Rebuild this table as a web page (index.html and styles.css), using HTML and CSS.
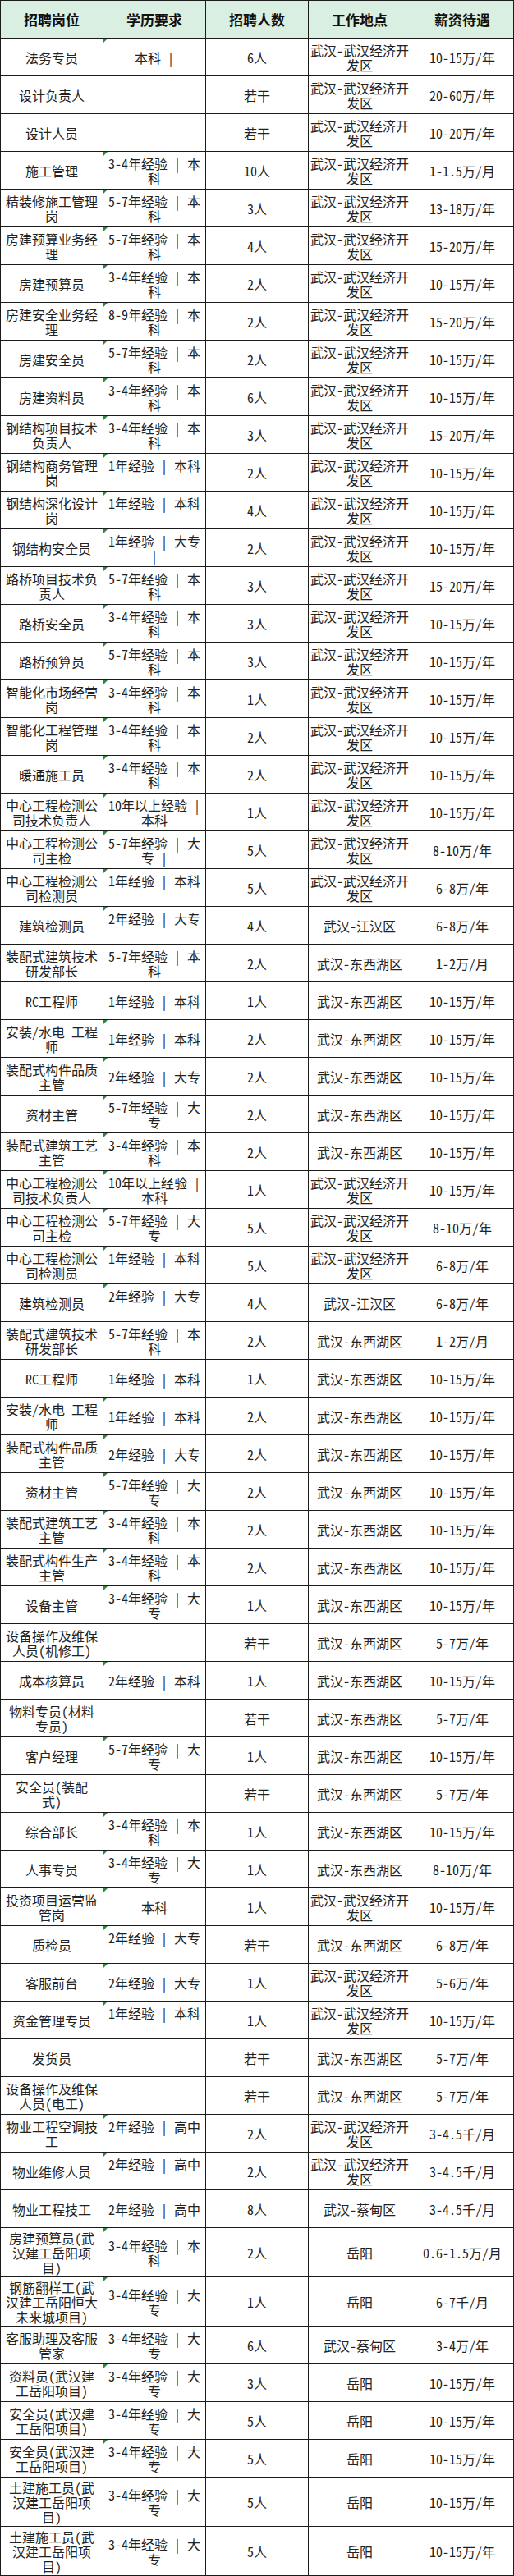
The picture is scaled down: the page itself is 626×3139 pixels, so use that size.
FILE: index.html
```html
<!DOCTYPE html>
<html lang="zh-CN">
<head>
<meta charset="utf-8">
<title>招聘岗位</title>
<link rel="stylesheet" href="styles.css">
</head>
<body>
<table class="jobs">
<thead>
<tr><th>招聘岗位</th><th>学历要求</th><th>招聘人数</th><th>工作地点</th><th>薪资待遇</th></tr>
</thead>
<tbody>
<tr><td>法务专员</td><td class="mark">本科 |</td><td>6人</td><td>武汉-武汉经济开<br>发区</td><td>10-15万/年</td></tr>
<tr><td>设计负责人</td><td></td><td>若干</td><td>武汉-武汉经济开<br>发区</td><td>20-60万/年</td></tr>
<tr><td>设计人员</td><td></td><td>若干</td><td>武汉-武汉经济开<br>发区</td><td>10-20万/年</td></tr>
<tr><td>施工管理</td><td class="mark">3-4年经验 | 本<br>科</td><td>10人</td><td>武汉-武汉经济开<br>发区</td><td>1-1.5万/月</td></tr>
<tr><td>精装修施工管理<br>岗</td><td class="mark">5-7年经验 | 本<br>科</td><td>3人</td><td>武汉-武汉经济开<br>发区</td><td>13-18万/年</td></tr>
<tr><td>房建预算业务经<br>理</td><td class="mark">5-7年经验 | 本<br>科</td><td>4人</td><td>武汉-武汉经济开<br>发区</td><td>15-20万/年</td></tr>
<tr><td>房建预算员</td><td class="mark">3-4年经验 | 本<br>科</td><td>2人</td><td>武汉-武汉经济开<br>发区</td><td>10-15万/年</td></tr>
<tr><td>房建安全业务经<br>理</td><td class="mark">8-9年经验 | 本<br>科</td><td>2人</td><td>武汉-武汉经济开<br>发区</td><td>15-20万/年</td></tr>
<tr><td>房建安全员</td><td class="mark">5-7年经验 | 本<br>科</td><td>2人</td><td>武汉-武汉经济开<br>发区</td><td>10-15万/年</td></tr>
<tr><td>房建资料员</td><td class="mark">3-4年经验 | 本<br>科</td><td>6人</td><td>武汉-武汉经济开<br>发区</td><td>10-15万/年</td></tr>
<tr><td>钢结构项目技术<br>负责人</td><td class="mark">3-4年经验 | 本<br>科</td><td>3人</td><td>武汉-武汉经济开<br>发区</td><td>15-20万/年</td></tr>
<tr><td>钢结构商务管理<br>岗</td><td class="mark top">1年经验 | 本科</td><td>2人</td><td>武汉-武汉经济开<br>发区</td><td>10-15万/年</td></tr>
<tr><td>钢结构深化设计<br>岗</td><td class="mark top">1年经验 | 本科</td><td>4人</td><td>武汉-武汉经济开<br>发区</td><td>10-15万/年</td></tr>
<tr><td>钢结构安全员</td><td class="mark">1年经验 | 大专<br>|</td><td>2人</td><td>武汉-武汉经济开<br>发区</td><td>10-15万/年</td></tr>
<tr><td>路桥项目技术负<br>责人</td><td class="mark">5-7年经验 | 本<br>科</td><td>3人</td><td>武汉-武汉经济开<br>发区</td><td>15-20万/年</td></tr>
<tr><td>路桥安全员</td><td class="mark">3-4年经验 | 本<br>科</td><td>3人</td><td>武汉-武汉经济开<br>发区</td><td>10-15万/年</td></tr>
<tr><td>路桥预算员</td><td class="mark">5-7年经验 | 本<br>科</td><td>3人</td><td>武汉-武汉经济开<br>发区</td><td>10-15万/年</td></tr>
<tr><td>智能化市场经营<br>岗</td><td class="mark">3-4年经验 | 本<br>科</td><td>1人</td><td>武汉-武汉经济开<br>发区</td><td>10-15万/年</td></tr>
<tr><td>智能化工程管理<br>岗</td><td class="mark">3-4年经验 | 本<br>科</td><td>2人</td><td>武汉-武汉经济开<br>发区</td><td>10-15万/年</td></tr>
<tr><td>暖通施工员</td><td class="mark">3-4年经验 | 本<br>科</td><td>2人</td><td>武汉-武汉经济开<br>发区</td><td>10-15万/年</td></tr>
<tr><td>中心工程检测公<br>司技术负责人</td><td class="mark">10年以上经验 |<br>本科</td><td>1人</td><td>武汉-武汉经济开<br>发区</td><td>10-15万/年</td></tr>
<tr><td>中心工程检测公<br>司主检</td><td class="mark">5-7年经验 | 大<br>专 |</td><td>5人</td><td>武汉-武汉经济开<br>发区</td><td>8-10万/年</td></tr>
<tr><td>中心工程检测公<br>司检测员</td><td class="mark top">1年经验 | 本科</td><td>5人</td><td>武汉-武汉经济开<br>发区</td><td>6-8万/年</td></tr>
<tr><td>建筑检测员</td><td class="mark top">2年经验 | 大专</td><td>4人</td><td>武汉-江汉区</td><td>6-8万/年</td></tr>
<tr><td>装配式建筑技术<br>研发部长</td><td>5-7年经验 | 本<br>科</td><td>2人</td><td>武汉-东西湖区</td><td>1-2万/月</td></tr>
<tr><td>RC工程师</td><td>1年经验 | 本科</td><td>1人</td><td>武汉-东西湖区</td><td>10-15万/年</td></tr>
<tr><td>安装/水电 工程<br>师</td><td class="mark">1年经验 | 本科</td><td>2人</td><td>武汉-东西湖区</td><td>10-15万/年</td></tr>
<tr><td>装配式构件品质<br>主管</td><td class="mark">2年经验 | 大专</td><td>2人</td><td>武汉-东西湖区</td><td>10-15万/年</td></tr>
<tr><td>资材主管</td><td class="mark">5-7年经验 | 大<br>专</td><td>2人</td><td>武汉-东西湖区</td><td>10-15万/年</td></tr>
<tr><td>装配式建筑工艺<br>主管</td><td class="mark">3-4年经验 | 本<br>科</td><td>2人</td><td>武汉-东西湖区</td><td>10-15万/年</td></tr>
<tr><td>中心工程检测公<br>司技术负责人</td><td class="mark">10年以上经验 |<br>本科</td><td>1人</td><td>武汉-武汉经济开<br>发区</td><td>10-15万/年</td></tr>
<tr><td>中心工程检测公<br>司主检</td><td class="mark">5-7年经验 | 大<br>专</td><td>5人</td><td>武汉-武汉经济开<br>发区</td><td>8-10万/年</td></tr>
<tr><td>中心工程检测公<br>司检测员</td><td class="mark top">1年经验 | 本科</td><td>5人</td><td>武汉-武汉经济开<br>发区</td><td>6-8万/年</td></tr>
<tr><td>建筑检测员</td><td class="mark top">2年经验 | 大专</td><td>4人</td><td>武汉-江汉区</td><td>6-8万/年</td></tr>
<tr><td>装配式建筑技术<br>研发部长</td><td>5-7年经验 | 本<br>科</td><td>2人</td><td>武汉-东西湖区</td><td>1-2万/月</td></tr>
<tr><td>RC工程师</td><td>1年经验 | 本科</td><td>1人</td><td>武汉-东西湖区</td><td>10-15万/年</td></tr>
<tr><td>安装/水电 工程<br>师</td><td class="mark">1年经验 | 本科</td><td>2人</td><td>武汉-东西湖区</td><td>10-15万/年</td></tr>
<tr><td>装配式构件品质<br>主管</td><td class="mark">2年经验 | 大专</td><td>2人</td><td>武汉-东西湖区</td><td>10-15万/年</td></tr>
<tr><td>资材主管</td><td class="mark">5-7年经验 | 大<br>专</td><td>2人</td><td>武汉-东西湖区</td><td>10-15万/年</td></tr>
<tr><td>装配式建筑工艺<br>主管</td><td class="mark">3-4年经验 | 本<br>科</td><td>2人</td><td>武汉-东西湖区</td><td>10-15万/年</td></tr>
<tr><td>装配式构件生产<br>主管</td><td class="mark">3-4年经验 | 本<br>科</td><td>2人</td><td>武汉-东西湖区</td><td>10-15万/年</td></tr>
<tr><td>设备主管</td><td class="mark">3-4年经验 | 大<br>专</td><td>1人</td><td>武汉-东西湖区</td><td>10-15万/年</td></tr>
<tr><td>设备操作及维保<br>人员（机修工）</td><td></td><td>若干</td><td>武汉-东西湖区</td><td>5-7万/年</td></tr>
<tr><td>成本核算员</td><td class="mark">2年经验 | 本科</td><td>1人</td><td>武汉-东西湖区</td><td>10-15万/年</td></tr>
<tr><td>物料专员（材料<br>专员）</td><td></td><td>若干</td><td>武汉-东西湖区</td><td>5-7万/年</td></tr>
<tr><td>客户经理</td><td class="mark">5-7年经验 | 大<br>专</td><td>1人</td><td>武汉-东西湖区</td><td>10-15万/年</td></tr>
<tr><td>安全员（装配<br>式）</td><td></td><td>若干</td><td>武汉-东西湖区</td><td>5-7万/年</td></tr>
<tr><td>综合部长</td><td class="mark">3-4年经验 | 本<br>科</td><td>1人</td><td>武汉-东西湖区</td><td>10-15万/年</td></tr>
<tr><td>人事专员</td><td class="mark">3-4年经验 | 大<br>专</td><td>1人</td><td>武汉-东西湖区</td><td>8-10万/年</td></tr>
<tr><td>投资项目运营监<br>管岗</td><td class="mark">本科</td><td>1人</td><td>武汉-武汉经济开<br>发区</td><td>10-15万/年</td></tr>
<tr><td>质检员</td><td class="mark top">2年经验 | 大专</td><td>若干</td><td>武汉-东西湖区</td><td>6-8万/年</td></tr>
<tr><td>客服前台</td><td class="mark">2年经验 | 大专</td><td>1人</td><td>武汉-武汉经济开<br>发区</td><td>5-6万/年</td></tr>
<tr><td>资金管理专员</td><td class="mark top">1年经验 | 本科</td><td>1人</td><td>武汉-武汉经济开<br>发区</td><td>10-15万/年</td></tr>
<tr><td>发货员</td><td></td><td>若干</td><td>武汉-东西湖区</td><td>5-7万/年</td></tr>
<tr><td>设备操作及维保<br>人员（电工）</td><td></td><td>若干</td><td>武汉-东西湖区</td><td>5-7万/年</td></tr>
<tr><td>物业工程空调技<br>工</td><td class="mark top">2年经验 | 高中</td><td>2人</td><td>武汉-武汉经济开<br>发区</td><td>3-4.5千/月</td></tr>
<tr><td>物业维修人员</td><td class="mark top">2年经验 | 高中</td><td>2人</td><td>武汉-武汉经济开<br>发区</td><td>3-4.5千/月</td></tr>
<tr><td>物业工程技工</td><td>2年经验 | 高中</td><td>8人</td><td>武汉-蔡甸区</td><td>3-4.5千/月</td></tr>
<tr class="tall"><td>房建预算员（武<br>汉建工岳阳项<br>目）</td><td class="mark">3-4年经验 | 本<br>科</td><td>2人</td><td>岳阳</td><td>0.6-1.5万/月</td></tr>
<tr class="tall"><td>钢筋翻样工（武<br>汉建工岳阳恒大<br>未来城项目）</td><td class="mark">3-4年经验 | 大<br>专</td><td>1人</td><td>岳阳</td><td>6-7千/月</td></tr>
<tr><td>客服助理及客服<br>管家</td><td>3-4年经验 | 大<br>专</td><td>6人</td><td>武汉-蔡甸区</td><td>3-4万/年</td></tr>
<tr><td>资料员（武汉建<br>工岳阳项目）</td><td class="mark">3-4年经验 | 大<br>专</td><td>3人</td><td>岳阳</td><td>10-15万/年</td></tr>
<tr><td>安全员（武汉建<br>工岳阳项目）</td><td>3-4年经验 | 大<br>专</td><td>5人</td><td>岳阳</td><td>10-15万/年</td></tr>
<tr><td>安全员（武汉建<br>工岳阳项目）</td><td class="mark">3-4年经验 | 大<br>专</td><td>5人</td><td>岳阳</td><td>10-15万/年</td></tr>
<tr class="tall"><td>土建施工员（武<br>汉建工岳阳项<br>目）</td><td>3-4年经验 | 大<br>专</td><td>5人</td><td>岳阳</td><td>10-15万/年</td></tr>
<tr class="tall"><td>土建施工员（武<br>汉建工岳阳项<br>目）</td><td>3-4年经验 | 大<br>专</td><td>5人</td><td>岳阳</td><td>10-15万/年</td></tr>
</tbody>
</table>
</body>
</html>
```

FILE: styles.css
```css
* {
  box-sizing: border-box;
}

html,
body {
  margin: 0;
  padding: 0;
  background: #ffffff;
}

body {
  font-family: "Noto Sans CJK SC", "Noto Sans", sans-serif;
  color: #222222;
}

.jobs {
  width: 626px;
  table-layout: fixed;
  border-collapse: separate;
  border-spacing: 0;
  border-top: 1px solid #1b1b1b;
  border-left: 1px solid #1b1b1b;
  font-feature-settings: "hwid" 1;
}

.jobs th,
.jobs td {
  height: 46px;
  padding: 0 1px;
  border-right: 1px solid #1b1b1b;
  border-bottom: 1px solid #1b1b1b;
  text-align: center;
  vertical-align: middle;
  white-space: nowrap;
  font-size: 16px;
  line-height: 18px;
  font-weight: 400;
}

.jobs th {
  background: #d9efe2;
  color: #111111;
  font-size: 17px;
  font-weight: 700;
}

.jobs tr.tall td {
  height: 60px;
}

.jobs td.top {
  vertical-align: top;
  padding-top: 5px;
}

.jobs td.mark {
  position: relative;
}

.jobs td.mark::before {
  content: "";
  position: absolute;
  left: 0;
  top: 0;
  border-top: 5px solid #2a8a3c;
  border-right: 5px solid transparent;
}
```
